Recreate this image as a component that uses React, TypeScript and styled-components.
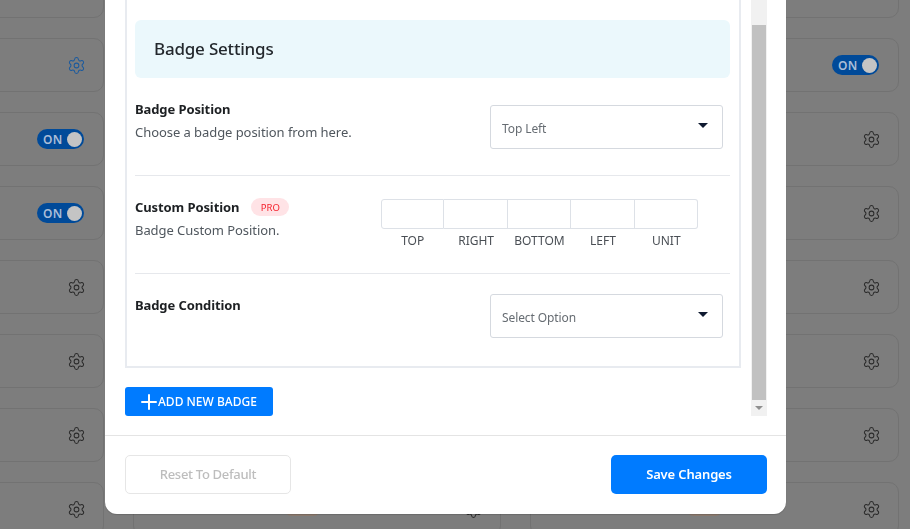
// App.tsx
import { Settings, Plus } from "lucide-react";
import styled, { createGlobalStyle } from "styled-components";

const GlobalStyle = createGlobalStyle`
    html, body {
        margin: 0;
        height: 100%;
        overflow: hidden;
        font-family: "Noto Sans", "Open Sans", sans-serif;
    }
`;

const Page = styled.div`
    height: 100vh;
    overflow: hidden;
    background: #7d7d7d;
`;

const Columns = styled.div`
    display: grid;
    grid-template-columns: 368px 368px 369px;
    column-gap: 29px;
    margin: -36px 0 0 -264px;
`;

const Column = styled.div`
    display: flex;
    flex-direction: column;
    gap: 20px;
`;

const Card = styled.div`
    position: relative;
    height: 54px;
    box-sizing: border-box;
    padding-right: 19px;
    display: flex;
    align-items: center;
    justify-content: flex-end;
    border: 1px solid #727272;
    border-radius: 10px;
`;

const Thumb = styled.div<{ $left: number }>`
    position: absolute;
    left: ${(p) => p.$left}px;
    top: 19px;
    width: 37px;
    height: 14px;
    border-radius: 0 0 8px 8px;
    background: #8b7a6e;
`;

const Gear = styled(Settings)<{ $active?: boolean }>`
    display: block;
    margin-right: -1.5px;
    color: ${(p) => (p.$active ? "#1b5a9e" : "#2b2b2b")};
`;

const Toggle = styled.div`
    width: 47px;
    height: 20px;
    box-sizing: border-box;
    padding: 0 2px 0 6px;
    display: flex;
    align-items: center;
    justify-content: space-between;
    border-radius: 10px;
    background: #004a99;
    color: #a9bdd8;
    font-size: 12px;
    font-weight: 600;
    letter-spacing: 0.3px;
`;

const Knob = styled.span`
    width: 15px;
    height: 15px;
    border-radius: 50%;
    background: #c4c4c4;
`;

const Modal = styled.div`
    position: fixed;
    left: 105px;
    top: 0;
    bottom: 15px;
    width: 681px;
    display: flex;
    flex-direction: column;
    background: #fff;
    border-radius: 0 0 12px 12px;
    box-shadow: 0 1px 1px rgba(0, 0, 0, 0.15);
`;

const ModalBody = styled.div`
    flex: 1;
    min-height: 0;
    display: flex;
    padding: 0 19px 19px 20px;
`;

const Content = styled.div`
    width: 616px;
    margin-right: 10px;
`;

const Panel = styled.div`
    height: 368px;
    box-sizing: border-box;
    padding: 20px 9px 0 8px;
    border: 2px solid #e8ebf0;
    border-top: none;
`;

const PanelHeader = styled.div`
    height: 58px;
    box-sizing: border-box;
    padding: 0 0 2px 19px;
    display: flex;
    align-items: center;
    background: #ebf8fc;
    border-radius: 6px;
    color: #23282d;
    font-size: 17px;
    font-weight: 500;
    letter-spacing: -0.2px;
`;

const Row = styled.div<{ $height: number; $last?: boolean }>`
    height: ${(p) => p.$height}px;
    box-sizing: border-box;
    padding-top: 22px;
    display: flex;
    align-items: flex-start;
    justify-content: space-between;
    border-bottom: ${(p) => (p.$last ? "none" : "1px solid #e6e8ec")};
`;

const Label = styled.div`
    display: flex;
    align-items: center;
    gap: 12px;
    height: 18px;
    margin-bottom: 5px;
    color: #1d2023;
    font-size: 13px;
    font-weight: 700;
    letter-spacing: -0.1px;
`;

const Description = styled.div`
    color: #50575e;
    font-size: 13px;
    line-height: 18px;
    letter-spacing: -0.06px;
`;

const ProPill = styled.span`
    width: 38px;
    height: 18px;
    display: flex;
    align-items: center;
    justify-content: center;
    border-radius: 9px;
    background: #ffe3e6;
    color: #f5222d;
    font-size: 9.5px;
    font-weight: 400;
    letter-spacing: 0;
`;

const SelectBox = styled.div<{ $offset: number }>`
    width: 233px;
    height: 44px;
    box-sizing: border-box;
    margin: ${(p) => p.$offset}px 7px 0 0;
    padding: 2px 14px 0 11px;
    display: flex;
    align-items: center;
    justify-content: space-between;
    border: 1px solid #d5d9df;
    border-radius: 3px;
    color: #666c72;
    font-size: 12px;
    letter-spacing: -0.1px;
`;

const Caret = styled.span`
    margin-top: -5px;
    border-left: 5px solid transparent;
    border-right: 5px solid transparent;
    border-top: 5px solid #0f1a30;
`;

const OffsetGroup = styled.div`
    width: 317px;
    margin: 1px 32px 0 0;
    display: grid;
    grid-template-columns: repeat(5, 1fr);
`;

const OffsetCell = styled.div`
    display: flex;
    flex-direction: column;
    align-items: stretch;
`;

const OffsetInput = styled.input<{ $pos: "first" | "middle" | "last" }>`
    height: 30px;
    width: 100%;
    box-sizing: border-box;
    padding: 0;
    outline: none;
    background: #fff;
    border: 1px solid #dde1e7;
    border-left: ${(p) => (p.$pos === "first" ? "1px solid #dde1e7" : "none")};
    border-radius: ${(p) =>
        p.$pos === "first" ? "3px 0 0 3px" : p.$pos === "last" ? "0 3px 3px 0" : "0"};
`;

const OffsetName = styled.span`
    margin-top: 4px;
    color: #4a4f55;
    font-size: 12px;
    line-height: 16px;
    text-align: center;
`;

const AddButton = styled.button`
    width: 148px;
    height: 29px;
    margin-top: 19px;
    padding: 0 0 0 12px;
    display: flex;
    align-items: center;
    border: none;
    border-radius: 3px;
    background: #007bff;
    color: #fff;
    font-family: inherit;
    font-size: 12px;
    font-weight: 500;
    svg {
        margin-right: -3px;
        flex: none;
    }
`;

const ScrollTrack = styled.div`
    width: 16px;
    display: flex;
    flex-direction: column;
    background: #f1f1f1;
`;

const ScrollThumb = styled.div`
    flex: 1;
    margin: 25px 1px 0 1px;
    background: #c1c1c1;
`;

const ScrollArrow = styled.div`
    height: 16px;
    display: flex;
    align-items: center;
    justify-content: center;
    &::before {
        content: "";
        border-left: 4px solid transparent;
        border-right: 4px solid transparent;
        border-top: 4px solid #8f8f8f;
    }
`;

const ModalFooter = styled.div`
    height: 79px;
    box-sizing: border-box;
    padding: 0 19px 2px 20px;
    display: flex;
    align-items: center;
    justify-content: space-between;
    border-top: 1px solid #e4e4e4;
`;

const ResetButton = styled.button`
    width: 166px;
    height: 39px;
    background: #fff;
    border: 1px solid #e6e6e6;
    border-radius: 5px;
    color: #bdbdbd;
    font-family: inherit;
    font-size: 13px;
    font-weight: 500;
    letter-spacing: -0.3px;
`;

const SaveButton = styled.button`
    width: 156px;
    height: 39px;
    background: #007bff;
    border: none;
    border-radius: 5px;
    color: #fff;
    font-family: inherit;
    font-size: 13px;
    font-weight: 600;
    letter-spacing: -0.15px;
`;

type Control = "gear" | "active" | "toggle" | "none";

const leftColumn: Control[] = ["none", "active", "toggle", "toggle", "gear", "gear", "gear", "gear"];
const middleColumn: Control[] = ["none", "none", "none", "none", "none", "none", "none", "gear"];
const rightColumn: Control[] = ["none", "toggle", "gear", "gear", "gear", "gear", "gear", "gear"];

const sides = ["TOP", "RIGHT", "BOTTOM", "LEFT", "UNIT"];

function renderColumn(controls: Control[], thumbLeft?: number) {
    return (
        <Column>
            {controls.map((control, index) => (
                <Card key={index}>
                    {thumbLeft !== undefined && index === controls.length - 1 && <Thumb $left={thumbLeft} />}
                    {control === "gear" && <Gear size={19} strokeWidth={1.3} />}
                    {control === "active" && <Gear size={19} strokeWidth={1.3} $active />}
                    {control === "toggle" && (
                        <Toggle>
                            ON
                            <Knob />
                        </Toggle>
                    )}
                </Card>
            ))}
        </Column>
    );
}

export default function App() {
    return (
        <Page>
            <GlobalStyle />
            <Columns>
                {renderColumn(leftColumn)}
                {renderColumn(middleColumn, 150)}
                {renderColumn(rightColumn, 155)}
            </Columns>
            <Modal>
                <ModalBody>
                    <Content>
                        <Panel>
                            <PanelHeader>Badge Settings</PanelHeader>
                            <Row $height={98}>
                                <div>
                                    <Label>Badge Position</Label>
                                    <Description>Choose a badge position from here.</Description>
                                </div>
                                <SelectBox $offset={5}>
                                    Top Left
                                    <Caret />
                                </SelectBox>
                            </Row>
                            <Row $height={98}>
                                <div>
                                    <Label>
                                        Custom Position
                                        <ProPill>PRO</ProPill>
                                    </Label>
                                    <Description>Badge Custom Position.</Description>
                                </div>
                                <OffsetGroup>
                                    {sides.map((side, index) => (
                                        <OffsetCell key={side}>
                                            <OffsetInput
                                                type="text"
                                                $pos={index === 0 ? "first" : index === sides.length - 1 ? "last" : "middle"}
                                            />
                                            <OffsetName>{side}</OffsetName>
                                        </OffsetCell>
                                    ))}
                                </OffsetGroup>
                            </Row>
                            <Row $height={93} $last>
                                <Label>Badge Condition</Label>
                                <SelectBox $offset={-2}>
                                    Select Option
                                    <Caret />
                                </SelectBox>
                            </Row>
                        </Panel>
                        <AddButton>
                            <Plus size={24} strokeWidth={2} />
                            ADD NEW BADGE
                        </AddButton>
                    </Content>
                    <ScrollTrack>
                        <ScrollThumb />
                        <ScrollArrow />
                    </ScrollTrack>
                </ModalBody>
                <ModalFooter>
                    <ResetButton>Reset To Default</ResetButton>
                    <SaveButton>Save Changes</SaveButton>
                </ModalFooter>
            </Modal>
        </Page>
    );
}
